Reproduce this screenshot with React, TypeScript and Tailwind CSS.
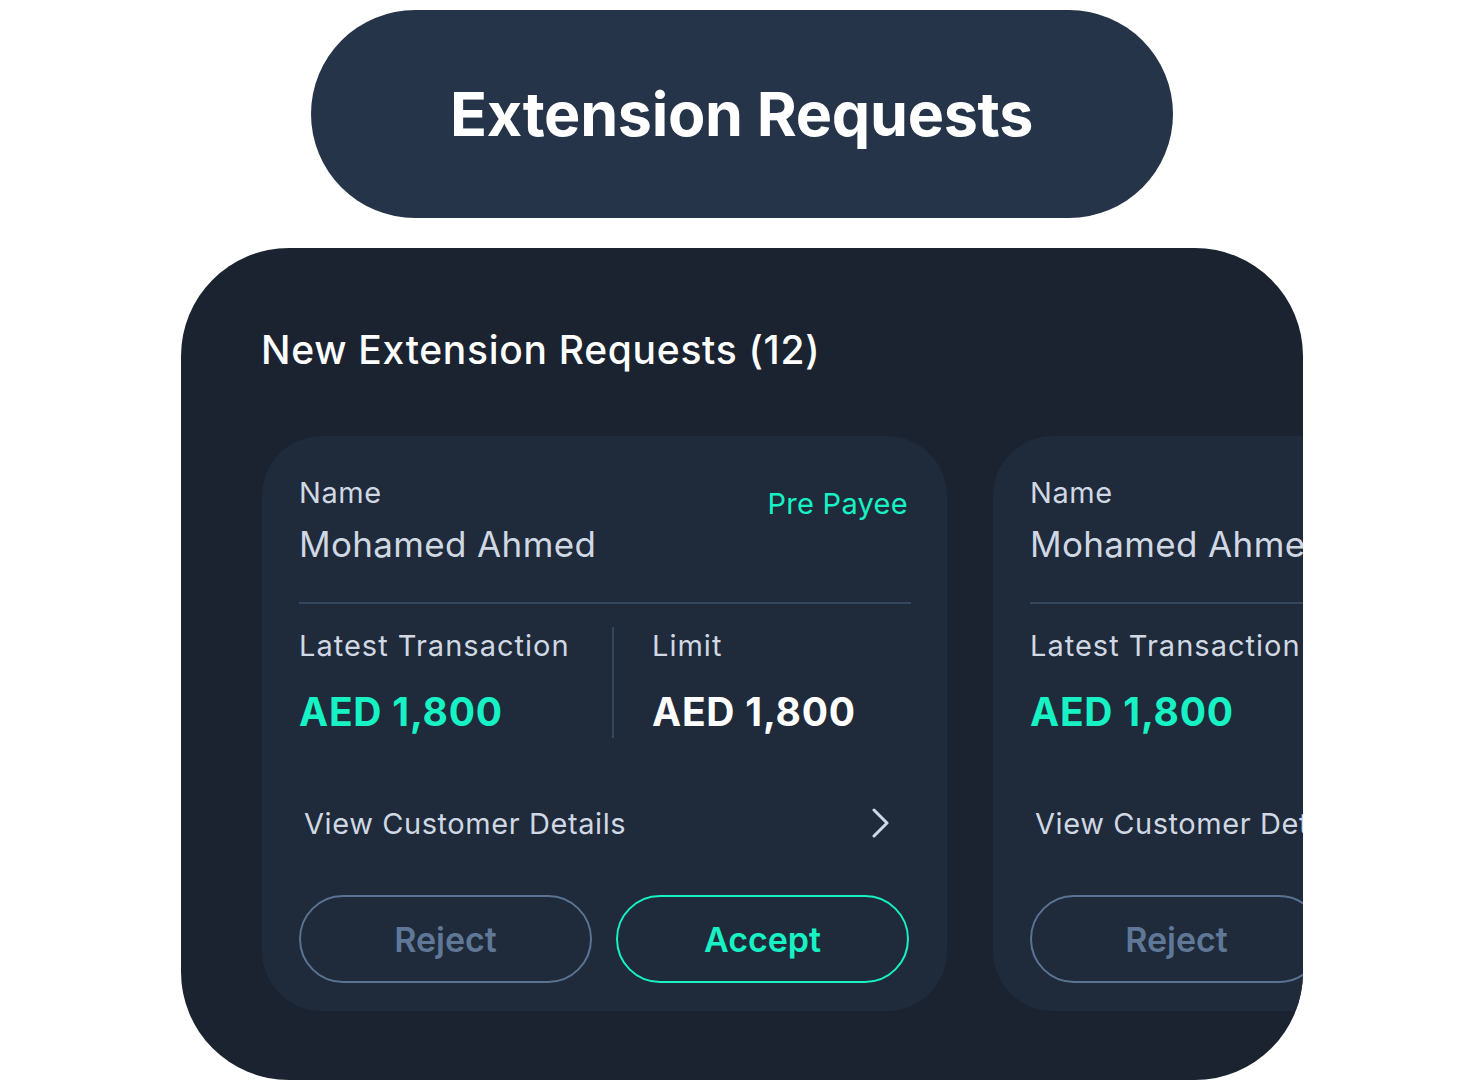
const font = { fontFamily: "Inter, 'Noto Sans', sans-serif" };

function Chevron() {
  return (
    <svg width="20" height="30" viewBox="0 0 20 30" fill="none" className="text-[#cfd8e3]">
      <path d="M3 2 L16 15 L3 28" stroke="currentColor" strokeWidth="3" strokeLinecap="round" strokeLinejoin="round" />
    </svg>
  );
}

function RequestCard() {
  return (
    <div className="w-[685px] shrink-0 rounded-[60px] bg-[#1f2a3a] pl-[37px] pr-[36px] pt-[42px] pb-[28px]">
      {/* Name + type */}
      <div className="flex justify-between">
        <div>
          <div className="text-[29px] leading-none text-[#d0d8e3] tracking-[0.02em]">Name</div>
          <div className="mt-[20px] text-[35px] leading-none text-[#d0d8e3] tracking-[0.01em]">Mohamed Ahmed</div>
        </div>
        <div className="mt-[11px] mr-[3px] text-[29px] leading-none text-[#17f2c5] tracking-[0.01em]">Pre Payee</div>
      </div>

      <div className="mt-[40px] h-[2px] bg-[#35475f]" />

      {/* Amounts */}
      <div className="mt-[23px] flex">
        <div className="w-[315px] shrink-0 border-r-2 border-[#35475f] pt-[4px] pb-[7px]">
          <div className="text-[29px] leading-none text-[#d0d8e3] tracking-[0.035em] whitespace-nowrap">Latest Transaction</div>
          <div className="mt-[32px] text-[39px] leading-none font-bold text-[#17f2c5] tracking-[0.02em] whitespace-nowrap">AED 1,800</div>
        </div>
        <div className="pl-[38px] pt-[4px] pb-[7px]">
          <div className="text-[29px] leading-none text-[#d0d8e3] tracking-[0.035em]">Limit</div>
          <div className="mt-[32px] text-[39px] leading-none font-bold text-white tracking-[0.02em] whitespace-nowrap">AED 1,800</div>
        </div>
      </div>

      {/* Details link */}
      <div className="mt-[70px] flex items-center justify-between pl-[5px] pr-[20px]">
        <span className="text-[29px] leading-none text-[#d0d8e3] tracking-[0.02em] whitespace-nowrap">View Customer Details</span>
        <Chevron />
      </div>

      {/* Actions */}
      <div className="mt-[57px] flex gap-[24px] pr-[2px]">
        <button className="h-[88px] w-[293px] rounded-full border-2 border-[#5b7393] text-[34px] font-semibold text-[#5f7898]">
          Reject
        </button>
        <button className="h-[88px] w-[293px] rounded-full border-[2.5px] border-[#17f2c5] text-[34px] font-semibold text-[#17f2c5]">
          Accept
        </button>
      </div>
    </div>
  );
}

export default function App() {
  return (
    <div className="w-[1484px] h-[1080px] bg-white overflow-hidden" style={font}>
      {/* Title pill */}
      <div className="pt-[10px] flex justify-center">
        <div className="ml-[-1px] w-[862px] h-[208px] rounded-full bg-[#253449] flex items-center justify-center">
          <h1 className="text-[61px] font-bold text-white tracking-[-0.005em] leading-none">Extension Requests</h1>
        </div>
      </div>

      {/* Panel */}
      <div className="mt-[30px] ml-[181px] w-[1122px] h-[832px] rounded-[108px] bg-[#1b2331] overflow-hidden pl-[80px] pt-[82px]">
        <h2 className="text-[39px] font-medium text-white leading-none tracking-[0.018em]">New Extension Requests (12)</h2>
        <div className="mt-[67px] flex gap-[46px] pl-[1px]">
          <RequestCard />
          <RequestCard />
        </div>
      </div>
    </div>
  );
}
